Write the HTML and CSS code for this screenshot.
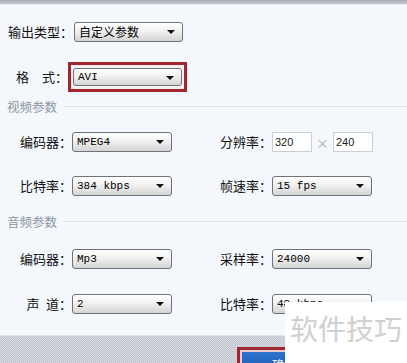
FILE: index.html
```html
<!DOCTYPE html>
<html lang="zh-CN">
<head>
    <meta charset="UTF-8">
    <title>输出参数设置</title>
    <link rel="stylesheet" href="styles.css">
</head>
<body>
    <div class="titlebar"></div>

    <div class="panel">
        <div class="row row-type">
            <label class="lbl-type">输出类型：</label>
            <div class="select select-wide"><span class="cn">自定义参数</span></div>
        </div>

        <div class="row row-format">
            <label class="lbl-format">格　式：</label>
            <div class="highlight">
                <div class="select select-wide select-short"><span>AVI</span></div>
            </div>
        </div>

        <div class="section section-video"><span>视频参数</span></div>

        <div class="pair pair-1">
            <div class="field">
                <label>编码器：</label>
                <div class="select"><span>MPEG4</span></div>
            </div>
            <div class="field field-right">
                <label>分辨率：</label>
                <input class="num" type="text" value="320">
                <span class="times">×</span>
                <input class="num" type="text" value="240">
            </div>
        </div>

        <div class="pair pair-2">
            <div class="field">
                <label>比特率：</label>
                <div class="select"><span>384 kbps</span></div>
            </div>
            <div class="field field-right">
                <label>帧速率：</label>
                <div class="select"><span>15 fps</span></div>
            </div>
        </div>

        <div class="section section-audio"><span>音频参数</span></div>

        <div class="pair pair-3">
            <div class="field">
                <label>编码器：</label>
                <div class="select"><span>Mp3</span></div>
            </div>
            <div class="field field-right">
                <label>采样率：</label>
                <div class="select"><span>24000</span></div>
            </div>
        </div>

        <div class="pair pair-4">
            <div class="field">
                <label>声&ensp;道：</label>
                <div class="select"><span>2</span></div>
            </div>
            <div class="field field-right">
                <label>比特率：</label>
                <div class="select"><span>48 kbps</span></div>
            </div>
        </div>
    </div>

    <div class="footer">
        <div class="btn-frame"><button class="btn-ok">确定</button></div>
    </div>

    <div class="watermark">软件技巧</div>
</body>
</html>
```

FILE: styles.css
```css
* {
    margin: 0;
    padding: 0;
    box-sizing: border-box;
}

html, body {
    height: 363px;
    overflow: hidden;
}

body {
    position: relative;
    background: #f4f7fb;
    color: #111;
    font-family: "Noto Sans CJK SC", "Liberation Sans", sans-serif;
    font-size: 13px;
}

.titlebar {
    height: 5px;
    background: linear-gradient(#a8acb3, #c4c8ce);
    border-bottom: 1px solid #e9edf2;
}

.panel {
    padding: 17px 0 0 8px;
}

.row, .pair, .field {
    display: flex;
    align-items: center;
}

.row, .pair {
    height: 20px;
}

label {
    display: block;
    line-height: 20px;
    white-space: nowrap;
}

.lbl-type {
    width: 66px;
}

.row-format {
    height: 30px;
    margin-top: 20px;
}

.lbl-format {
    width: 60px;
    text-align: right;
}

.highlight {
    border: 3px solid #a3262e;
    padding: 3px 2px;
    background: #f6eef0;
}

/* fake combo box */
.select {
    position: relative;
    width: 100px;
    height: 20px;
    border: 1px solid #6d737b;
    border-radius: 3px;
    background: linear-gradient(#ffffff, #f1f1f1 45%, #d4d4d4);
    padding-left: 4px;
    font-family: "Liberation Mono", monospace;
    font-size: 11px;
    line-height: 18px;
    color: #000;
}

.select::after {
    content: '';
    position: absolute;
    right: 7px;
    top: 7px;
    border-left: 4px solid transparent;
    border-right: 4px solid transparent;
    border-top: 4px solid #111;
}

.select-wide {
    width: 109px;
}

.select-short {
    height: 18px;
    line-height: 16px;
}

.select .cn {
    font-family: "Noto Sans CJK SC", sans-serif;
    font-size: 12px;
}

.section {
    display: flex;
    align-items: center;
    height: 18px;
    margin-left: -1px;
    color: #8a95a2;
    font-size: 12.5px;
}

.section::after {
    content: '';
    flex: 1;
    height: 1px;
    margin-left: 7px;
    background: #dde3ea;
}

.section-video {
    margin-top: 5px;
}

.section-audio {
    margin-top: 16px;
}

.field label {
    width: 64px;
    text-align: right;
}

.field-right {
    margin-left: 46px;
}

.field-right label {
    width: 54px;
}

.pair-1 { margin-top: 17px; }
.pair-2 { margin-top: 24px; }
.pair-3 { margin-top: 19px; }
.pair-4 { margin-top: 25px; }

.num {
    width: 40px;
    height: 20px;
    border: 1px solid #c9cfd6;
    background: #fff;
    padding-left: 2px;
    font-family: "Liberation Sans", sans-serif;
    font-size: 11px;
    color: #222;
    outline: none;
}

.times {
    width: 21px;
    text-align: center;
    color: #a4acb5;
    font-size: 13px;
}

.footer {
    margin-top: 21px;
    height: 40px;
    padding: 11px 0 0 237px;
    border-top: 1px solid #e2e6ec;
    background: repeating-conic-gradient(#c2c7cf 0 25%, #d5d9df 0 50%) 0 0 / 2px 2px;
}

.btn-frame {
    width: 96px;
    border: 3px solid #a0262f;
    padding: 2px;
    background: #e8c9cd;
}

.btn-ok {
    display: block;
    width: 100%;
    height: 24px;
    border: none;
    background: linear-gradient(#2d74cf, #1b54a8);
    color: #fff;
    font-family: "Noto Sans CJK SC", sans-serif;
    font-size: 13px;
}

.watermark {
    position: absolute;
    right: 0;
    bottom: 0;
    width: 122px;
    height: 61px;
    background: #fff;
    padding: 12px 0 0 5px;
    color: #d0d0d0;
    font-size: 28px;
    line-height: 1;
    white-space: nowrap;
}
```
